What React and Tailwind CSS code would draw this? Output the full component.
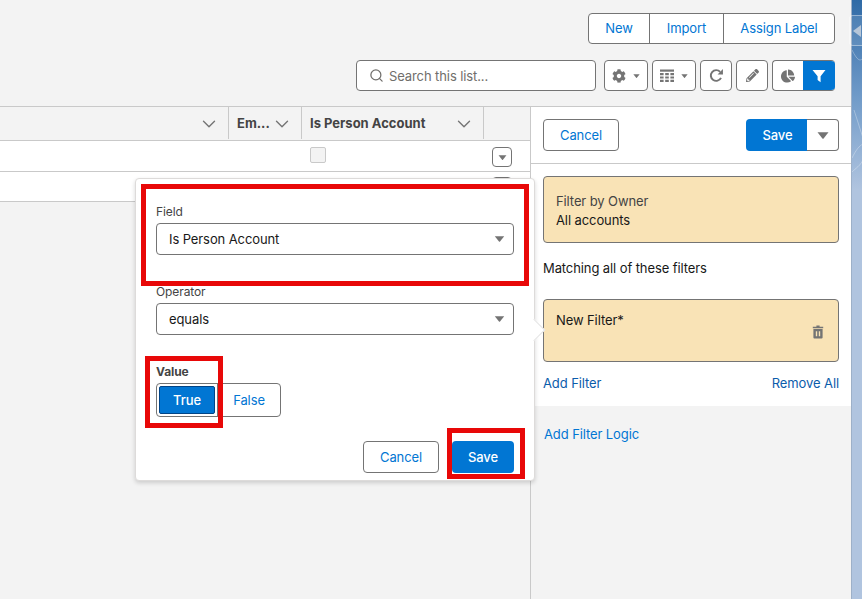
import React from "react";
import { Search, ChevronDown } from "lucide-react";
import { FaCog, FaChartPie, FaPencilAlt } from "react-icons/fa";

const Tri = ({ w = 12, h = 7, c = "#747474" }) => (
  <svg width={w} height={h} viewBox="0 0 12 7" className="shrink-0">
    <path d="M0.5 0.3H11.5L6.6 6.5a.8.8 0 0 1-1.2 0Z" fill={c} />
  </svg>
);

const Select = ({ value }) => (
  <div className="h-[32px] w-[358px] rounded-[4px] border border-[#747474] bg-white flex items-center justify-between pl-[12px] pr-[8px] text-[13px] text-[#181818]">
    <span className="pt-[2px]">{value}</span>
    <Tri w={11} h={6} />
  </div>
);

const IconBtn = ({ className = "", children }) => (
  <div className={`h-[31px] rounded-[4px] border border-[#747474] bg-white flex items-center justify-center ${className}`}>
    {children}
  </div>
);

const Col = ({ className = "", children }) => (
  <div className={`h-[33px] flex items-center relative after:absolute after:right-0 after:top-0 after:bottom-[1px] after:w-px after:bg-[#c9c9c9] ${className}`}>
    {children}
  </div>
);

const Red = ({ className }) => <div className={`absolute border-[5px] border-[#e80808] pointer-events-none ${className}`} />;

const Chev = () => <ChevronDown size={22} strokeWidth={1.5} color="#747474" />;

export default function App() {
  return (
    <div className="relative w-[862px] h-[599px] overflow-hidden flex bg-[#f3f3f3] text-[13px] text-[#181818]" style={{ fontFamily: "Inter, 'Liberation Sans', sans-serif", letterSpacing: "-0.1px" }}>
      <div className="w-[851px] shrink-0 flex flex-col">
        {/* top actions */}
        <header className="h-[106px] shrink-0 flex flex-col items-end pt-[13px] pr-[16px] border-b-0">
          <div className="flex h-[31px] rounded-[4px] border border-[#747474] bg-white text-[#0176d3]">
            <div className="w-[61px] flex items-center justify-center border-r border-[#747474]">New</div>
            <div className="w-[74px] flex items-center justify-center border-r border-[#747474]">Import</div>
            <div className="w-[110px] flex items-center justify-center">Assign Label</div>
          </div>
          <div className="flex mt-[16px] gap-[4px]">
            <div className="w-[240px] h-[31px] mr-[4px] rounded-[4px] border border-[#747474] bg-white flex items-center pl-[12px] text-[#706e6b]">
              <Search size={15} strokeWidth={2} className="text-[#706e6b] mr-[5px]" />
              <span className="pt-[2px]">Search this list...</span>
            </div>
            <IconBtn className="w-[44px] gap-[7px]">
              <FaCog size={14} color="#747474" />
              <Tri w={7} h={4} />
            </IconBtn>
            <IconBtn className="w-[44px] gap-[7px]">
              <svg width="14" height="14" viewBox="0 0 14 14" fill="#747474">
                <rect x="0" y="0.5" width="14" height="2.2" />
                <path d="M0 4h3.6v2.2H0zM5.2 4h3.6v2.2H5.2zM10.4 4H14v2.2h-3.6zM0 7.4h3.6v2.2H0zM5.2 7.4h3.6v2.2H5.2zM10.4 7.4H14v2.2h-3.6zM0 10.8h3.6V13H0zM5.2 10.8h3.6V13H5.2zM10.4 10.8H14V13h-3.6z" />
              </svg>
              <Tri w={7} h={4} />
            </IconBtn>
            <IconBtn className="w-[32px]">
              <svg width="15" height="15" viewBox="0 0 14 14" fill="none">
                <path d="M11.2 9.2A5 5 0 1 1 10.4 3.6" stroke="#747474" strokeWidth="1.8" />
                <path d="M13 1v5H8Z" fill="#747474" />
              </svg>
            </IconBtn>
            <IconBtn className="w-[32px]">
              <FaPencilAlt size={13} color="#747474" />
            </IconBtn>
            <div className="w-[63px] h-[31px] flex rounded-[4px] border border-[#747474] border-r-0 bg-white overflow-hidden">
              <div className="w-[30px] flex items-center justify-center">
                <FaChartPie size={14} color="#747474" />
              </div>
              <div className="flex-1 -my-px bg-[#0176d3] flex items-center justify-center">
                <svg width="14" height="14" viewBox="0 0 14 14">
                  <path d="M0.5 1h13L8.6 7.2V13.2L5.6 11V7.2Z" fill="#fff" />
                </svg>
              </div>
            </div>
          </div>
        </header>

        <div className="flex flex-1 min-h-0 border-t border-[#c9c9c9]">
          {/* table */}
          <div className="w-[530px] shrink-0 flex flex-col">
            <div className="flex h-[34px] shrink-0 border-b border-[#c9c9c9] font-bold text-[#444444]" style={{ letterSpacing: "0" }}>
              <Col className="w-[229px] justify-end pr-[9px]">
                <Chev />
              </Col>
              <Col className="w-[73px] pl-[8px] justify-between pr-[9px]">
                <span>Em...</span>
                <Chev />
              </Col>
              <Col className="w-[182px] pl-[8px] justify-between pr-[9px]">
                <span>Is Person Account</span>
                <Chev />
              </Col>
            </div>
            <div className="flex items-start h-[31px] shrink-0 bg-white border-b border-[#c9c9c9] pt-[6px]">
              <div className="ml-[310px] w-[16px] h-[16px] rounded-[2px] border border-[#c9c9c9] bg-[#f3f3f3]" />
              <div className="ml-[166px] w-[20px] h-[20px] rounded-[4px] border border-[#747474] bg-white flex items-center justify-center">
                <Tri w={9} h={5} />
              </div>
            </div>
            <div className="flex items-start h-[30px] shrink-0 bg-white border-b border-[#c9c9c9] pt-[5px]">
              <div className="ml-[492px] w-[20px] h-[20px] rounded-[4px] border border-[#747474] bg-white" />
            </div>
          </div>

          {/* filter panel */}
          <aside className="flex-1 flex flex-col border-l border-[#c9c9c9] bg-white min-w-0">
            <div className="h-[57px] shrink-0 border-b border-[#c9c9c9] flex items-center justify-between pl-[12px] pr-[12px]">
              <div className="w-[76px] h-[32px] pt-[2px] rounded-[4px] border border-[#747474] flex items-center justify-center text-[#0176d3]">Cancel</div>
              <div className="flex h-[32px]">
                <div className="w-[61px] pt-[2px] pl-[2px] rounded-l-[4px] bg-[#0176d3] flex items-center justify-center text-white font-medium">Save</div>
                <div className="w-[32px] rounded-r-[4px] border border-l-0 border-[#747474] flex items-center justify-center">
                  <Tri />
                </div>
              </div>
            </div>
            <div className="h-[242px] shrink-0 px-[12px] pt-[12px]">
              <div className="h-[67px] rounded-[4px] border border-[#747474] bg-[#f9e3b6] pl-[12px] pt-[15px]">
                <div className="text-[#444444] leading-[19px]">Filter by Owner</div>
                <div className="leading-[19px]">All accounts</div>
              </div>
              <div className="mt-[16px] leading-[19px]">Matching all of these filters</div>
              <div className="relative mt-[21px] h-[63px] rounded-[4px] border border-[#747474] bg-[#f9e3b6] pl-[12px] pt-[11px] leading-[19px]">
                New Filter*
                <svg width="12" height="14" viewBox="0 0 12 14" className="absolute right-[14px] top-[25px]">
                  <path d="M4.4 0.6h3.2v1.1h3.6v1.5H0.8V1.7h3.6ZM1.4 4.1h9.2v8.4a1 1 0 0 1-1 1H2.4a1 1 0 0 1-1-1ZM3.8 6.2v5h1.4v-5ZM6.8 6.2v5h1.4v-5Z" fill="#747474" fillRule="evenodd" />
                </svg>
              </div>
              <div className="flex justify-between mt-[12px] text-[#0b5cab] leading-[19px]">
                <span>Add Filter</span>
                <span>Remove All</span>
              </div>
            </div>
            <div className="flex-1 bg-[#f3f3f3] pl-[13px] pt-[19px] text-[#0176d3] leading-[19px]">Add Filter Logic</div>
          </aside>
        </div>
      </div>

      {/* desktop background sliver */}
      <div className="flex-1 relative border-l border-[#9db0c8] bg-gradient-to-b from-[#2f6aa6] via-[#6f9ac8] to-[#b0c4df] bg-[length:100%_190px] bg-no-repeat bg-[#b0c4df]">
        <svg width="11" height="180" viewBox="0 0 11 180" className="absolute left-0 top-0" fill="none" stroke="#ffffff" strokeOpacity="0.3">
          <path d="M0 50C5 60 8 62 11 58M0 158C4 150 7 146 11 144M0 172C4 168 8 166 11 160M2 110l9 28" />
        </svg>
      </div>
      <div className="absolute left-[849px] top-[15px] w-[20px] h-[31px] rounded-l-[4px] border border-white/40 bg-white/10 flex items-center pl-[3px]">
        <svg width="8" height="14" viewBox="0 0 8 14"><path d="M0 7l8-6v12Z" fill="#b6c6d8" /></svg>
      </div>

      {/* popover */}
      <div className="absolute left-[135px] top-[178px] w-[400px] h-[303px] rounded-[4px] bg-white border border-[#dddbda] shadow-[0_2px_4px_rgba(0,0,0,0.16)] pl-[20px] pr-[19px] pt-[25px]">
        <div className="text-[12px] leading-[16px] text-[#444444] mb-[3px]">Field</div>
        <Select value="Is Person Account" />
        <div className="text-[12px] leading-[16px] text-[#444444] mt-[29px] mb-[3px]">Operator</div>
        <Select value="equals" />
        <div className="text-[12px] leading-[16px] font-bold text-[#444444] mt-[29px] mb-[3px]">Value</div>
        <div className="w-[125px] h-[34px] rounded-[4px] border border-[#747474] flex items-center pl-[2px]">
          <div className="w-[56px] h-[28px] pt-[2px] rounded-[2px] border border-[#014486] bg-[#0176d3] text-white font-medium flex items-center justify-center">True</div>
          <div className="ml-[2px] h-full w-px bg-[#747474]" />
          <div className="flex-1 pt-[2px] flex items-center justify-center text-[#0176d3]">False</div>
        </div>
        <div className="absolute right-[20px] bottom-[7px] flex gap-[13px]">
          <div className="w-[76px] h-[32px] pt-[2px] rounded-[4px] border border-[#747474] flex items-center justify-center text-[#0176d3]">Cancel</div>
          <div className="w-[62px] h-[32px] pt-[2px] rounded-[4px] bg-[#0176d3] flex items-center justify-center text-white font-medium">Save</div>
        </div>
      </div>
      <div className="absolute left-[526px] top-[322px] w-[16px] h-[16px] rotate-45 bg-white border-t border-r border-[#e5e5e5]" />

      {/* annotations */}
      <Red className="left-[141px] top-[184px] w-[388px] h-[102px]" />
      <Red className="left-[145px] top-[356px] w-[78px] h-[72px]" />
      <Red className="left-[447px] top-[428px] w-[78px] h-[51px]" />
    </div>
  );
}
